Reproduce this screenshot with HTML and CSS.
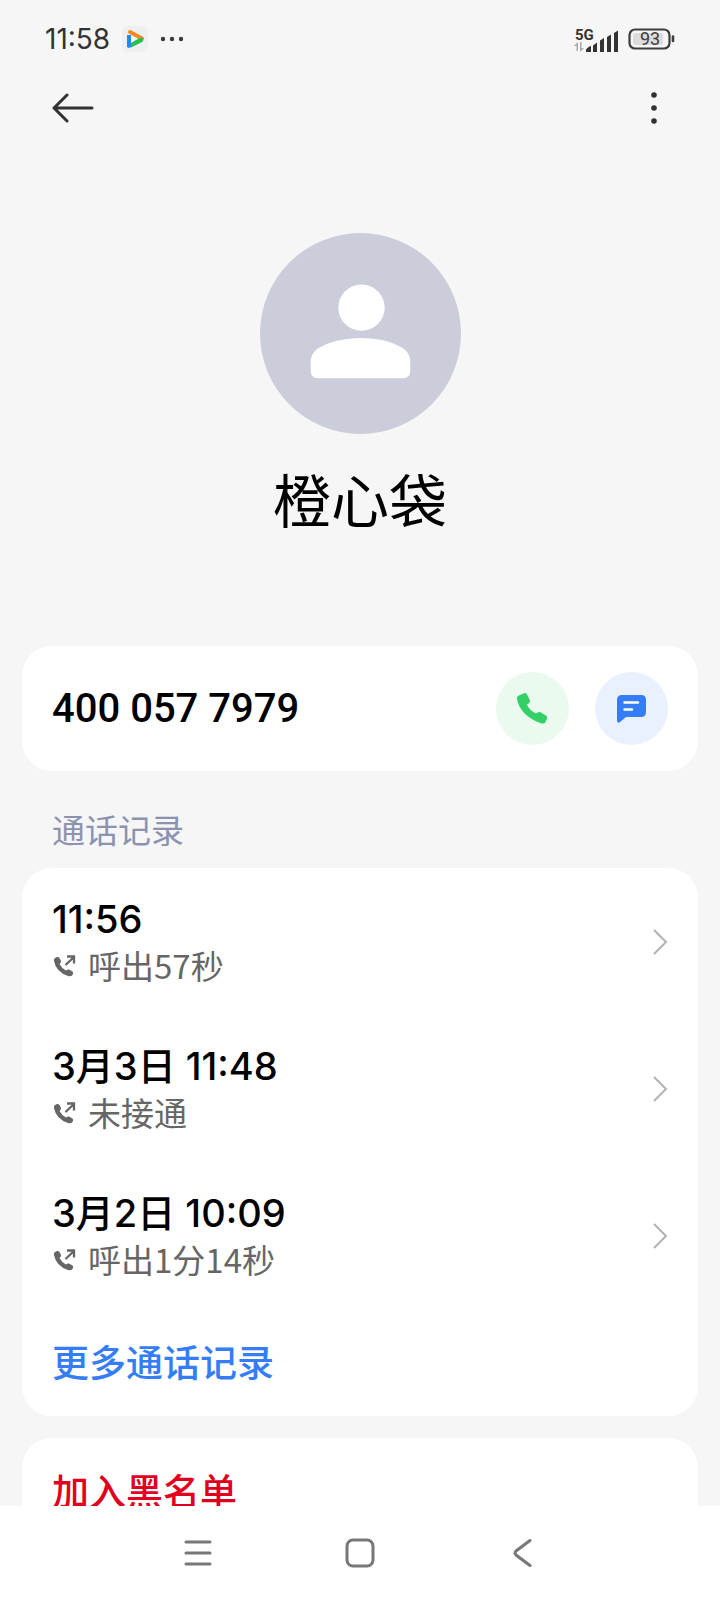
FILE: index.html
```html
<!DOCTYPE html>
<html lang="zh-CN">
<head>
<meta charset="utf-8">
<meta name="viewport" content="width=device-width, initial-scale=1">
<title>橙心袋</title>
<link rel="stylesheet" href="styles.css">
</head>
<body>
<div class="status-bar">
  <div class="status-group">
    <span class="clock">11:58</span>
    <svg class="app-icon" width="26" height="26" viewBox="0 0 26 26" aria-hidden="true">
      <rect width="26" height="26" rx="6" fill="#edeff0"/>
      <path d="M8 6 20 12.500" stroke="#f58a25" stroke-width="4" stroke-linecap="round"/>
      <path d="M9 19 19 14" stroke="#26c04c" stroke-width="4.500" stroke-linecap="round"/>
      <path d="M5 9H9V21L6.500 22 5 21Z" fill="#168df2"/>
      <path d="M9 9.500 15 13 9 17Z" fill="#f4f7f8"/>
    </svg>
    <svg width="24" height="6" viewBox="0 0 24 6" fill="#3a3a3a" aria-hidden="true"><circle cx="3" cy="3" r="2.200"/><circle cx="12" cy="3" r="2.200"/><circle cx="21" cy="3" r="2.200"/></svg>
  </div>
  <div class="status-group status-right">
    <svg width="46" height="30" viewBox="0 -4 46 30" aria-hidden="true">
      <text class="network" x="1" y="12">5G</text>
      <path d="M0 18 4 14V23H2.500V18ZM6 14H7.500V20H10L6 24Z" fill="#aaa"/>
      <path d="M12 24V21.500Q15 18 17 18V24ZM19 24V17.500L23 14.500V24ZM26 24V12.500L30 10V24ZM33 24V9L37 6.500V24ZM40 24V5L44 2.500V24Z" fill="#333"/>
    </svg>
    <svg width="47" height="22" viewBox="0 0 47 22" aria-label="93%">
      <rect x="1.500" y="1.500" width="40" height="19" rx="5.500" fill="none" stroke="#3d3d3d" stroke-width="2.200"/>
      <rect x="5" y="5" width="30" height="12" rx="2" fill="#dcdcdc"/>
      <path d="M45 8.500V13" stroke="#3d3d3d" stroke-width="2.600" stroke-linecap="round"/>
      <text class="battery" x="22" y="17" text-anchor="middle">93</text>
    </svg>
  </div>
</div>

<header class="toolbar">
  <button class="tool back" aria-label="返回"><svg width="42" height="30" viewBox="0 0 42 30" fill="none" stroke="#333" stroke-width="3" stroke-linecap="round" stroke-linejoin="round"><path d="M15 2 2 15 15 28M2 15H40"/></svg></button>
  <button class="tool menu" aria-label="更多选项"><svg width="8" height="34" viewBox="0 0 8 34" fill="#333"><circle cx="4" cy="4" r="2.800"/><circle cx="4" cy="17" r="2.800"/><circle cx="4" cy="30" r="2.800"/></svg></button>
</header>

<main class="content">
  <section class="profile">
    <svg class="avatar" width="201" height="201" viewBox="0 0 202 202" aria-hidden="true">
      <circle cx="101" cy="101" r="101" fill="#cccdda"/>
      <circle cx="102" cy="75" r="23.300" fill="#fff"/>
      <path d="M51 129Q51 121 58 116C83 102 121 102 144 116Q151 121 151 129V139Q151 146 144 146H58Q51 146 51 139Z" fill="#fff"/>
    </svg>
    <h1 class="name">橙心袋</h1>
  </section>

  <section class="card phone">
    <span class="number">400 057 7979</span>
    <div class="actions">
      <button class="round call" aria-label="拨打电话"><svg width="34" height="34" viewBox="0 0 34 34" fill="#32d067"><path d="M4 3 8 1.300Q10 .5 11 2.500L14 8.500Q14.500 10.500 11 12.500Q13 18 20 21.500Q22 19.500 24 20L30 23.500Q31.500 24.500 31 26.500L29.500 30Q28.500 32.500 24 31Q4 23 1 7Q.5 4 4 3Z"/></svg></button>
      <button class="round message" aria-label="发送短信"><svg width="30" height="28" viewBox="0 0 30 28"><path d="M5 0H24Q29 0 29 5V17Q29 22 24 22H9L3 27Q0 29 0 25V5Q0 0 5 0Z" fill="#347df6"/><path d="M7.500 7.500H21M7.500 14.500H15" stroke="#fff" stroke-width="2.500" stroke-linecap="round"/></svg></button>
    </div>
  </section>

  <h2 class="section-title">通话记录</h2>

  <section class="card">
    <button class="record">
      <span class="record-text">
        <span class="record-time">11:56</span>
        <span class="record-info"><svg class="out" width="24" height="24" viewBox="0 0 24 24"><use href="#outgoing"/></svg>呼出57秒</span>
      </span>
      <svg class="chevron" width="16" height="28" viewBox="0 0 16 28"><path d="M2 2 14 14 2 26"/></svg>
    </button>
    <button class="record">
      <span class="record-text">
        <span class="record-time">3月3日 11:48</span>
        <span class="record-info"><svg class="out" width="24" height="24" viewBox="0 0 24 24"><use href="#outgoing"/></svg>未接通</span>
      </span>
      <svg class="chevron" width="16" height="28" viewBox="0 0 16 28"><path d="M2 2 14 14 2 26"/></svg>
    </button>
    <button class="record">
      <span class="record-text">
        <span class="record-time">3月2日 10:09</span>
        <span class="record-info"><svg class="out" width="24" height="24" viewBox="0 0 24 24"><use href="#outgoing"/></svg>呼出1分14秒</span>
      </span>
      <svg class="chevron" width="16" height="28" viewBox="0 0 16 28"><path d="M2 2 14 14 2 26"/></svg>
    </button>
    <button class="link-row more">更多通话记录</button>
  </section>

  <section class="card last">
    <button class="link-row block">加入黑名单</button>
  </section>
</main>

<nav class="nav-bar">
  <button class="nav-key" aria-label="最近任务"><svg width="28" height="28" viewBox="0 0 28 28"><path d="M2 3H26M2 14H26M2 25H26"/></svg></button>
  <button class="nav-key" aria-label="主屏幕"><svg width="30" height="30" viewBox="0 0 30 30"><rect x="2" y="2" width="26" height="26" rx="6"/></svg></button>
  <button class="nav-key" aria-label="返回"><svg width="20" height="30" viewBox="0 0 20 30"><path d="M18 2.500 4 13Q2 15 4 17L18 27.500"/></svg></button>
</nav>

<svg class="symbols" aria-hidden="true">
  <symbol id="outgoing" viewBox="0 0 24 24">
    <path d="M3 5 5 4Q6.500 3.500 7.500 5L9 8Q9.500 9.500 7.500 11Q9.500 15 14 17.500Q15.500 16 17 16.500L20.500 18.500Q21.500 19.500 21 21Q20 24 16 23Q4 19 2 8Q1.500 6 3 5Z" fill="#666"/>
    <path d="M13.500 12 22 4M15 3.500H22V10.500" fill="none" stroke="#666" stroke-width="2.300"/>
  </symbol>
</svg>
</body>
</html>
```
FILE: styles.css
```css
* {
  box-sizing: border-box;
}

body {
  margin: 0;
  height: 100vh;
  display: flex;
  flex-direction: column;
  background: #f6f6f6;
  color: #000;
  font-family: "Noto Sans CJK SC", sans-serif;
}

button {
  padding: 0;
  border: 0;
  background: none;
  color: inherit;
  font: inherit;
  text-align: left;
}

svg {
  display: block;
  flex: none;
}

.symbols {
  display: none;
}

.status-bar {
  flex: none;
  height: 76px;
  padding: 2px 45px 0;
  display: flex;
  align-items: center;
  justify-content: space-between;
}

.status-group {
  display: flex;
  align-items: center;
  gap: 12px;
}

.status-right {
  gap: 8px;
}

.clock {
  font: 400 28px/32px Inter, sans-serif;
  color: #333;
}

.network {
  font: 700 15px Roboto, sans-serif;
  fill: #333;
}

.battery {
  font: 400 18px Roboto, sans-serif;
  fill: #3d3d3d;
}

.toolbar {
  flex: none;
  height: 64px;
  padding: 0 40px;
  display: flex;
  justify-content: space-between;
}

.tool {
  display: flex;
  align-items: center;
  justify-content: center;
}

.back {
  width: 66px;
}

.menu {
  width: 52px;
}

.content {
  flex: 1;
  min-height: 0;
  overflow: hidden;
  padding: 93px 22px 0;
}

.profile {
  display: flex;
  flex-direction: column;
  align-items: center;
  padding-bottom: 112px;
}

.name {
  margin: 28px 0 0;
  font-size: 58px;
  line-height: 72px;
  font-weight: 400;
}

.card {
  padding: 0 30px;
  border-radius: 30px;
  background: #fff;
}

.phone {
  height: 125px;
  display: flex;
  align-items: center;
  justify-content: space-between;
}

.number {
  font: 500 40px/46px Roboto, sans-serif;
}

.actions {
  display: flex;
  gap: 26px;
}

.round {
  width: 73px;
  height: 73px;
  border-radius: 50%;
  display: flex;
  align-items: center;
  justify-content: center;
}

.call {
  background: #eafaef;
}

.message {
  background: #e9f1fe;
}

.section-title {
  margin: 0;
  padding: 35px 30px 16px;
  font-size: 33px;
  line-height: 46px;
  font-weight: 400;
  color: #8c93b0;
}

.record {
  width: 100%;
  height: 147px;
  display: flex;
  align-items: center;
  justify-content: space-between;
}

.record-text {
  display: flex;
  flex-direction: column;
}

.record-time {
  font: 500 38px/46px Inter, "Noto Sans CJK SC", sans-serif;
}

.record-info {
  display: flex;
  align-items: center;
  gap: 12px;
  font-size: 33px;
  line-height: 46px;
  color: #666;
}

.chevron {
  fill: none;
  stroke: #b2b2b2;
  stroke-width: 2;
}

.link-row {
  display: block;
  width: 100%;
  height: 107px;
  padding-bottom: 4px;
  font-size: 37px;
  font-weight: 500;
}

.more {
  color: #347df6;
}

.block {
  color: #e1001e;
}

.last {
  margin-top: 22px;
}

.nav-bar {
  flex: none;
  height: 94px;
  display: flex;
  justify-content: center;
  background: #fff;
}

.nav-key {
  width: 162px;
  display: flex;
  align-items: center;
  justify-content: center;
  fill: none;
  stroke: #777;
  stroke-width: 3;
  stroke-linecap: round;
}
```
